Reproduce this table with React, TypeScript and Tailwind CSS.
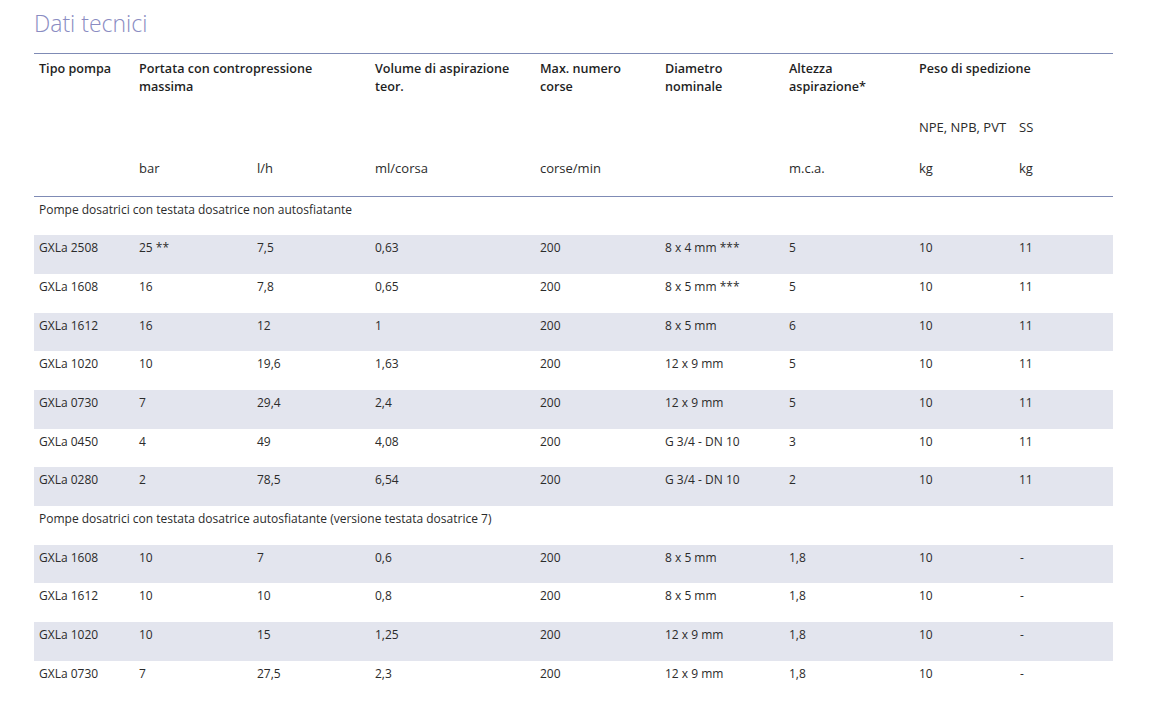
const cols = ["w-[100px]", "w-[118px]", "w-[118px]", "w-[165px]", "w-[125px]", "w-[124px]", "w-[130px]", "w-[100px]", "w-[99px]"];

type Row = string[];

const section1: Row[] = [
  ["GXLa 2508", "25 **", "7,5", "0,63", "200", "8 x 4 mm ***", "5", "10", "11"],
  ["GXLa 1608", "16", "7,8", "0,65", "200", "8 x 5 mm ***", "5", "10", "11"],
  ["GXLa 1612", "16", "12", "1", "200", "8 x 5 mm", "6", "10", "11"],
  ["GXLa 1020", "10", "19,6", "1,63", "200", "12 x 9 mm", "5", "10", "11"],
  ["GXLa 0730", "7", "29,4", "2,4", "200", "12 x 9 mm", "5", "10", "11"],
  ["GXLa 0450", "4", "49", "4,08", "200", "G 3/4 - DN 10", "3", "10", "11"],
  ["GXLa 0280", "2", "78,5", "6,54", "200", "G 3/4 - DN 10", "2", "10", "11"],
];

const section2: Row[] = [
  ["GXLa 1608", "10", "7", "0,6", "200", "8 x 5 mm", "1,8", "10", "-"],
  ["GXLa 1612", "10", "10", "0,8", "200", "8 x 5 mm", "1,8", "10", "-"],
  ["GXLa 1020", "10", "15", "1,25", "200", "12 x 9 mm", "1,8", "10", "-"],
  ["GXLa 0730", "7", "27,5", "2,3", "200", "12 x 9 mm", "1,8", "10", "-"],
];

const cell = "px-[5px] pt-[4px] align-top text-left font-normal";

function DataRows({ rows }: { rows: Row[] }) {
  return (
    <>
      {rows.map((r, i) => (
        <tr key={i} className={`h-[38.7px] ${i % 2 === 0 ? "bg-[#e3e5ee]" : "bg-white"}`}>
          {r.map((v, j) => (
            <td key={j} className={`${cell} ${j === 8 && v === "-" ? "pl-[6px]" : ""}`}>
              {v}
            </td>
          ))}
        </tr>
      ))}
    </>
  );
}

function SectionLabel({ text }: { text: string }) {
  return (
    <tr className="h-[38.7px]">
      <td colSpan={9} className={`${cell} pt-[4px]`}>
        {text}
      </td>
    </tr>
  );
}

export default function App() {
  return (
    <div className="min-h-screen bg-white px-[34px] pt-[6px] font-['Open_Sans',sans-serif] text-[#2b2b2b]">
      <h1 className="text-[23px] font-light leading-[34px] text-[#8a8cc2]">Dati tecnici</h1>

      <table className="mt-[13px] w-[1079px] table-fixed border-collapse text-[13px] leading-[18px]">
        <colgroup>
          {cols.map((c, i) => (
            <col key={i} className={c} />
          ))}
        </colgroup>
        <thead className="border-t border-b border-[#7f8bb5]">
          <tr className="h-[59px]">
            {[
              "Tipo pompa",
              "Portata con contropressione massima",
              "",
              "Volume di aspirazione teor.",
              "Max. numero corse",
              "Diametro nominale",
              "Altezza aspirazione*",
              "Peso di spedizione",
              "",
            ].map((h, i) =>
              i === 2 || i === 8 ? null : (
                <th
                  key={i}
                  colSpan={i === 1 || i === 7 ? 2 : 1}
                  className={`px-[5px] pt-[6px] align-top text-left text-[12.6px] font-semibold text-[#1f1f1f] ${i === 1 ? "pr-[50px]" : ""}`}
                >
                  {h}
                </th>
              )
            )}
          </tr>
          <tr className="h-[42px]">
            <td colSpan={7} />
            <td className={`${cell} pt-[5px]`}>NPE, NPB, PVT</td>
            <td className={`${cell} pt-[5px]`}>SS</td>
          </tr>
          <tr className="h-[42px]">
            {["", "bar", "l/h", "ml/corsa", "corse/min", "", "m.c.a.", "kg", "kg"].map((u, i) => (
              <td key={i} className={`${cell} pt-[4px]`}>
                {u}
              </td>
            ))}
          </tr>
        </thead>
        <tbody className="text-[12px]">
          <SectionLabel text="Pompe dosatrici con testata dosatrice non autosfiatante" />
          <DataRows rows={section1} />
          <SectionLabel text="Pompe dosatrici con testata dosatrice autosfiatante (versione testata dosatrice 7)" />
          <DataRows rows={section2} />
        </tbody>
      </table>
    </div>
  );
}
